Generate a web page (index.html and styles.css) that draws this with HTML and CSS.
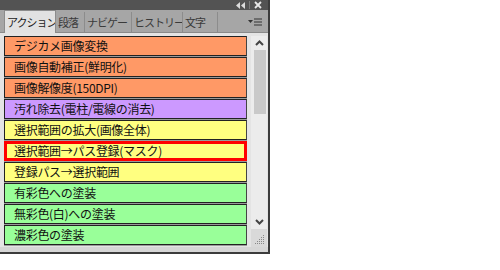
FILE: index.html
```html
<!DOCTYPE html>
<html lang="ja">
<head>
  <meta charset="UTF-8" />
  <title>アクション</title>
  <link rel="stylesheet" href="styles.css">
</head>
<body>
  <div class="panel">
    <div class="titlebar">
      <span class="collapse">
        <svg width="9" height="7" viewBox="0 0 9 7"><path d="M4 0v7L0 3.5zM9 0v7L5 3.5z" fill="#dcdcdc"/></svg>
      </span>
      <span class="sep"></span>
      <span class="close">
        <svg width="8" height="8" viewBox="0 0 8 8"><path d="M1 1l6 6M7 1L1 7" stroke="#e8e8e8" stroke-width="1.8"/></svg>
      </span>
    </div>
    <div class="tabs">
      <div class="tab active">アクション</div>
      <div class="tab t-para">段落</div>
      <div class="tab t-nav">ナビゲー</div>
      <div class="tab t-hist">ヒストリー</div>
      <div class="tab t-char">文字</div>
      <div class="menu">
        <svg width="14" height="9" viewBox="0 0 14 9"><path d="M0 2h5L2.5 5z" fill="#333"/><path d="M6 1h8M6 4h8M6 7h8" stroke="#333" stroke-width="1.2"/></svg>
      </div>
    </div>
    <div class="body">
      <ul class="actions">
        <li class="orange">デジカメ画像変換</li>
        <li class="orange">画像自動補正(鮮明化)</li>
        <li class="orange">画像解像度(150DPI)</li>
        <li class="purple">汚れ除去(電柱/電線の消去)</li>
        <li class="yellow">選択範囲の拡大(画像全体)</li>
        <li class="yellow selected">選択範囲→パス登録(マスク)</li>
        <li class="yellow">登録パス→選択範囲</li>
        <li class="green">有彩色への塗装</li>
        <li class="green">無彩色(白)への塗装</li>
        <li class="green">濃彩色の塗装</li>
      </ul>
      <div class="scrollbar">
        <div class="arrow">
          <svg width="9" height="6" viewBox="0 0 9 6"><path d="M1 5l3.5-3.5L8 5" fill="none" stroke="#444" stroke-width="2"/></svg>
        </div>
        <div class="thumb"></div>
        <div class="track"></div>
        <div class="arrow">
          <svg width="9" height="6" viewBox="0 0 9 6"><path d="M1 1l3.5 3.5L8 1" fill="none" stroke="#444" stroke-width="2"/></svg>
        </div>
        <div class="grip">
          <svg width="10" height="10" viewBox="0 0 10 10" fill="#888"><rect x="8" y="0" width="1" height="1"/><rect x="6" y="2" width="1" height="1"/><rect x="8" y="2" width="1" height="1"/><rect x="4" y="4" width="1" height="1"/><rect x="6" y="4" width="1" height="1"/><rect x="8" y="4" width="1" height="1"/><rect x="2" y="6" width="1" height="1"/><rect x="4" y="6" width="1" height="1"/><rect x="6" y="6" width="1" height="1"/><rect x="8" y="6" width="1" height="1"/><rect x="0" y="8" width="1" height="1"/><rect x="2" y="8" width="1" height="1"/><rect x="4" y="8" width="1" height="1"/><rect x="6" y="8" width="1" height="1"/><rect x="8" y="8" width="1" height="1"/></svg>
        </div>
      </div>
    </div>
    <div class="footer"></div>
  </div>
</body>
</html>
```

FILE: styles.css
```css
body {
  margin: 0;
  background: #ffffff;
  font-family: "Noto Sans CJK JP", "DejaVu Sans", sans-serif;
}
.panel {
  width: 268px;
  border-right: 2px solid #3c3c3c;
  border-bottom: 2px solid #3c3c3c;
  background: #d6d6d6;
}
.titlebar {
  height: 10px;
  background: #535353;
  display: flex;
  justify-content: flex-end;
  align-items: center;
  padding-right: 6px;
}
.titlebar .collapse, .titlebar .close {
  display: flex;
}
.titlebar .sep {
  width: 1px;
  height: 8px;
  background: #7a7a7a;
  margin: 0 4px;
}
.tabs {
  height: 22px;
  background: #a6a6a6;
  display: flex;
  align-items: flex-end;
  padding-left: 4px;
  border-bottom: 1px solid #8a8a8a;
}
.tab {
  flex-shrink: 0;
  box-sizing: border-box;
  height: 20px;
  padding-left: 2px;
  font-size: 11px;
  letter-spacing: -1px;
  line-height: 20px;
  color: #3a3a3a;
  border-right: 1px solid #8c8c8c;
  overflow: hidden;
  white-space: nowrap;
}
.tab.active {
  width: 52px;
  background: #e2e2e2;
  color: #222;
  height: 23px;
  line-height: 22px;
  border: 1px solid #8c8c8c;
  border-bottom: none;
  margin-bottom: -1px;
}
.t-para { width: 29px; }
.t-nav { width: 47px; }
.t-hist { width: 51px; }
.t-char { width: 35px; }
.menu {
  margin-left: auto;
  align-self: center;
  display: flex;
  padding: 2px 6px 0 0;
}
.body {
  display: flex;
  background: #e4e4e4;
  padding: 3px 0 0 4px;
}
.actions {
  list-style: none;
  margin: 0;
  padding: 0;
  width: 243px;
  height: 211px;
  overflow: hidden;
}
.actions li {
  height: 18px;
  line-height: 18px;
  font-size: 12px;
  letter-spacing: -0.3px;
  color: #111;
  padding-left: 9px;
  border: 1px solid #222;
  border-right-color: #444;
  margin-bottom: 1px;
  box-shadow: 0 1px 0 #9a9a9a;
  white-space: nowrap;
}
.orange { background: #ff9966; }
.purple { background: #cc99ff; }
.yellow { background: #ffff80; }
.green { background: #99ff99; }
.actions li.selected {
  border: 3px solid #ff0000;
  height: 14px;
  line-height: 14px;
  padding-left: 7px;
}
.scrollbar {
  width: 16px;
  margin-left: 4px;
  display: flex;
  flex-direction: column;
  background: #ececec;
}
.arrow {
  height: 14px;
  display: flex;
  align-items: center;
  justify-content: center;
}
.thumb {
  height: 64px;
  background: #c9c9c9;
  margin: 0 1px 0 3px;
}
.track {
  flex: 1;
}
.grip {
  height: 16px;
  background: #d9d9d9;
  display: flex;
  align-items: flex-end;
  justify-content: flex-end;
  padding: 0 2px 2px 0;
}
.footer {
  height: 5px;
  background: #d6d6d6;
}
```
